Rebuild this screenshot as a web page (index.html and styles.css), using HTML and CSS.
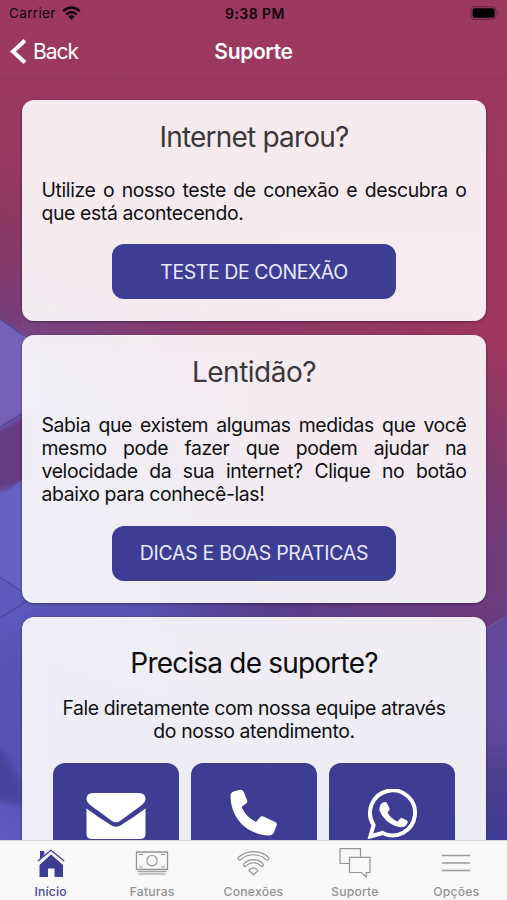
FILE: index.html
```html
<!DOCTYPE html>
<html lang="pt-BR">
<head>
<meta charset="utf-8">
<meta name="viewport" content="width=device-width, initial-scale=1">
<title>Suporte</title>
<link rel="stylesheet" href="styles.css">
</head>
<body>
<div class="app">
  <svg class="backdrop" viewBox="0 0 507 900" preserveAspectRatio="none" aria-hidden="true">
    <defs>
      <linearGradient id="right" x1="0" y1="0" x2="0" y2="1">
        <stop offset="0" stop-color="#9c395f"/><stop offset=".38" stop-color="#9f375d"/>
        <stop offset=".5" stop-color="#833a6b"/><stop offset=".62" stop-color="#6d3b7a"/><stop offset=".7" stop-color="#693c80"/>
        <stop offset=".93" stop-color="#403c97"/>
      </linearGradient>
      <linearGradient id="wedge" x1="0" y1="0" x2="0" y2="1">
        <stop offset="0" stop-color="#624899"/><stop offset=".4" stop-color="#604ba2"/><stop offset=".57" stop-color="#5c479a"/><stop offset=".7" stop-color="#4d3f8d"/><stop offset="1" stop-color="#403c97"/>
      </linearGradient>
      <linearGradient id="left" x1="0" y1="0" x2="0" y2="1">
        <stop offset="0" stop-color="#9c395f"/><stop offset=".16" stop-color="#9a395f"/><stop offset=".28" stop-color="#863966"/><stop offset=".36" stop-color="#75407f"/>
        <stop offset=".4" stop-color="#7562ba"/><stop offset=".6" stop-color="#6560c2"/><stop offset=".75" stop-color="#5655b6"/><stop offset=".85" stop-color="#5654b4"/><stop offset=".93" stop-color="#605bc4"/>
      </linearGradient>
      <linearGradient id="fade"><stop offset="0" stop-color="#fff"/><stop offset=".12" stop-color="#bbb"/><stop offset=".55" stop-color="#000"/></linearGradient>
      <mask id="side"><path fill="url(#fade)" d="M0 0H507V900H0z"/></mask>
      <linearGradient id="lower" x1="0" x2="1"><stop offset="0" stop-color="#5a59bb"/><stop offset=".3" stop-color="#5752b0"/><stop offset=".55" stop-color="#573f8d"/><stop offset="1" stop-color="#6d3a7b"/></linearGradient>
      <linearGradient id="upper" x1="0" x2="1"><stop offset="0" stop-color="#784483"/><stop offset=".4" stop-color="#873969"/><stop offset="1" stop-color="#9f375d"/></linearGradient>
      <filter id="soft"><feGaussianBlur stdDeviation="3"/></filter>
    </defs>
    <path fill="url(#right)" d="M0 0H507V900H0z"/>
    <path fill="url(#left)" mask="url(#side)" d="M0 0H507V900H0z"/>
    <path fill="url(#upper)" d="M22 316H486V345H22z"/>
    <path fill="url(#lower)" d="M0 590H486V628H0z"/>
    <path fill="#7762ba" d="M0 319L26 337V410L0 427z"/>
    <path filter="url(#soft)" fill="#653b82" d="M-8 434L30 412V482L-8 492z"/>
    <path fill="#6861c1" d="M0 497L22 480V600L0 580z"/>
    <path fill="#5c5aba" d="M0 578L33 598V609L0 630z"/>
    <path fill="none" stroke="#49489f" stroke-width="1.300" d="M0 319L24 336M0 427L24 413M0 577L32 598L0 618"/>
    <path filter="url(#soft)" fill="#48439c" d="M-8 735L14 770L22 785V805L-8 800z"/>
    <path fill="url(#wedge)" d="M480 632L507 616V840H480z"/>
    <path fill="none" stroke="#7b589f" d="M480 632L507 616"/>
  </svg>

  <div class="content">
    <header>
      <div class="status">
        <span class="carrier">Carrier
          <svg width="19" height="14" viewBox="0 0 19 14"><g fill="none" stroke="#100408" stroke-width="2.5"><path d="M1.2 5.1Q9.5 -2 17.8 5.1"/><path d="M4.2 8.4Q9.500 3.900 14.8 8.400"/></g><path fill="#100408" d="M6.400 10.600Q9.500 8 12.600 10.600L9.500 13.700z"/></svg>
        </span>
        <span class="clock">9:38 PM</span>
        <svg class="battery" width="31" height="14" viewBox="0 0 31 14"><rect x="1" y=".7" width="25" height="12.600" rx="4" fill="none" stroke="#6e2a45" stroke-width="1.300"/><rect x="2.600" y="2.300" width="22" height="9.400" rx="2.300" fill="#000"/><path fill="#6e2a45" d="M27.600 4.600Q30 7 27.600 9.400z"/></svg>
      </div>
      <nav class="navbar">
        <a class="back"><svg width="18" height="28" viewBox="0 0 18 28"><path d="M16 2.500L4 13.500L16 24.500" fill="none" stroke="#fff" stroke-width="4"/></svg><span>Back</span></a>
        <h1>Suporte</h1>
      </nav>
    </header>

    <main>
      <section class="card card-test">
        <h2><span class="t1">Internet parou?</span></h2>
        <p class="copy">Utilize o nosso teste de conexão e descubra o que está acontecendo.</p>
        <a class="button b1">TESTE DE CONEXÃO</a>
      </section>
      <section class="card card-tips">
        <h2><span class="t2">Lentidão?</span></h2>
        <p class="copy">Sabia que existem algumas medidas que você mesmo pode fazer que podem ajudar na velocidade da sua internet? Clique no botão abaixo para conhecê-las!</p>
        <a class="button b2">DICAS E BOAS PRATICAS</a>
      </section>
      <section class="card card-contact">
        <h2><span class="t3">Precisa de suporte?</span></h2>
        <p class="intro">Fale diretamente com nossa equipe através<br>do nosso atendimento.</p>
        <div class="tiles">
          <a class="tile"><svg width="62" height="50" viewBox="0 0 62 50"><path fill="#fff" d="M8 4H54Q60.500 4 60.500 10C60.500 14 55 17.500 50 21L35 32Q31 34.500 27 32L12 21C7 17.500 1.500 14 1.500 10Q1.500 4 8 4zM1.500 19.500Q13 28 25 35.500Q31 40 37 35.500Q49 28 60.500 19.500V45Q60.500 50 55 50H7Q1.500 50 1.500 45z"/></svg></a>
          <a class="tile"><svg width="62" height="50" viewBox="0 0 62 50"><path fill="#fff" d="M10.500 2.500L17 .8Q19.500 .5 20.700 3L24 11Q25 13 23 14.500L18.500 18Q23 28 33 33L37 28.200Q38.500 26.500 40.500 27.500L50 32Q54.500 33.500 53.800 36L51.500 42Q50 46.500 45.500 46.500C23 45 8 29 7.500 7Q7.500 3.500 10.500 2.500z"/></svg></a>
          <a class="tile"><svg width="62" height="50" viewBox="0 0 62 50"><path fill="none" stroke="#fff" stroke-width="4" d="M9.300 47.500L12.600 36A22.500 22.500 0 1 1 21.500 44z"/><path fill="#fff" d="M21 14Q24 12 26 14L28.500 19.500Q29 21 26.500 23.500Q29.500 29.500 36.500 32.500Q39.500 28.500 41 29L46 31.500Q47.500 32.300 46 35Q43.500 39 38 38C28 35.500 21.500 29 18.500 21.500Q18 17 21 14z"/></svg></a>
        </div>
      </section>
    </main>

    <nav class="tabs">
      <a class="tab active">
        <svg width="36" height="34" viewBox="0 0 36 34"><path fill="#3e3d94" d="M6.500 31V19L18 8.500L30 19V31H21.500V22.500H15V31zM7 5H11.300V9L7 13z"/><path fill="none" stroke="#3e3d94" stroke-width="1.300" d="M5 15L18 4.300L31.200 15"/></svg>
        <span>Início</span></a>
      <a class="tab">
        <svg width="36" height="34" viewBox="0 0 36 34"><g fill="none" stroke="#929292"><path d="M2.500 6H33.500V23.500H2.500z" stroke-width="1.300"/><circle cx="18" cy="14.700" r="5.200" stroke-width="1.200"/><path d="M5 8.500H9M27 8.500H31M5 21H9M27 21H31M3.500 25.700H32.500M4.500 28H31.500"/></g></svg>
        <span>Faturas</span></a>
      <a class="tab">
        <svg width="36" height="34" viewBox="0 0 36 34"><g fill="#f8f8f8" stroke="#929292" stroke-width="1.100" stroke-linejoin="round"><path d="M3 12C11 3.500 26 3.500 34 12Q33.500 14.500 31.500 14C24 7 13 7 5.500 14Q3.500 14.500 3 12z"/><path d="M8.500 18.500C13.500 12 23.500 12 28.500 18.500Q28.500 20.500 26.500 20.500C22 15.500 15 15.500 10.500 20.500Q8.500 20.500 8.500 18.500z"/><path d="M14 24.300Q18.500 19.500 23 24.300Q23 25.500 21.500 26L18.500 29L15.500 26Q14 25.500 14 24.300z"/></g></svg>
        <span>Conexões</span></a>
      <a class="tab">
        <svg width="36" height="34" viewBox="0 0 36 34"><path fill="none" stroke="#929292" stroke-width="1.200" d="M12 17.500H3V2.700H23.500V10.500M12.500 11.300H33V26.500H29.300V31L24.500 26.500H12.500z"/></svg>
        <span>Suporte</span></a>
      <a class="tab">
        <svg width="36" height="34" viewBox="0 0 36 34"><path stroke="#999" stroke-width="1.400" d="M4 9.500H32M4 17H32M4 24.500H32"/></svg>
        <span>Opções</span></a>
    </nav>
  </div>
</div>
</body>
</html>
```
FILE: styles.css
```css
* { box-sizing: border-box; }
body { margin: 0; font-family: Inter, "Liberation Sans", sans-serif; color: #101012; }
h1, h2, p { margin: 0; font-weight: 400; }
svg { display: block; flex: none; }
.app { display: grid; width: 507px; height: 900px; overflow: hidden; }
.backdrop, .content { grid-area: 1 / 1; width: 507px; height: 900px; }
.backdrop { z-index: 0; }
.content { z-index: 1; display: flex; flex-direction: column; }

header { flex: none; height: 79px; border-bottom: 1px solid #8d3457; }
.status { display: grid; grid-template-columns: 1fr auto 1fr; height: 26px; padding: 0 6px 0 9px; align-items: center; color: #100408; font-size: 13.5px; }
.carrier { display: flex; align-items: center; gap: 6px; letter-spacing: .35px; }
.clock { font-weight: 600; font-size: 14px; letter-spacing: .45px; }
.battery { justify-self: end; }
.navbar { display: grid; grid-template-columns: 1fr auto 1fr; height: 51px; padding: 0 9px; align-items: center; color: #fff; }
.back { display: flex; align-items: center; gap: 6px; font-size: 21px; letter-spacing: -1px; }
h1 { font-size: 21px; font-weight: 600; letter-spacing: -.35px; }

main { flex: 1; min-height: 0; overflow: hidden; display: flex; flex-direction: column; gap: 14px; padding: 21px 21px 0 22px; }
.card { flex: none; border-radius: 12px; padding: 17px 20px; background: rgba(255, 255, 255, .9); box-shadow: 0 1px 3px rgba(30, 10, 50, .5); display: flex; flex-direction: column; align-items: center; }
.card-test { height: 221px; }
.card-tips { height: 268px; }
.card-contact { height: 320px; padding-top: 27px; }
h2 { font-size: 28px; line-height: 40px; white-space: nowrap; color: #3a383b; }
.t1 { letter-spacing: -.8px; }
.t2 { letter-spacing: -.5px; }
.t3 { letter-spacing: -.8px; }
.card-contact h2 { color: #0c0c0e; line-height: 38px; }
.copy { width: 425px; margin: 21.5px 0 19.5px; font-size: 19.4px; line-height: 23.2px; letter-spacing: -.38px; text-align: justify; }
.button { display: flex; align-items: center; justify-content: center; width: 284px; height: 55px; border-radius: 12px; background: #3e3d94; color: #e8eaff; font-size: 19.5px; letter-spacing: -.45px; white-space: nowrap; }
.b2 { letter-spacing: -.3px; }
.intro { margin-top: 15px; font-size: 19.4px; line-height: 23.2px; letter-spacing: -.37px; text-align: center; white-space: nowrap; }
.tiles { display: flex; gap: 12px; margin-top: 20px; }
.tile { display: flex; justify-content: center; width: 126px; height: 126px; padding-top: 26px; border-radius: 12px; background: #3e3d94; }

.tabs { flex: none; height: 60px; display: grid; grid-template-columns: repeat(5, 1fr); background: #f8f8f8; border-top: 1px solid #d5d5dc; }
.tab { display: flex; flex-direction: column; align-items: center; padding-top: 5px; color: #929292; font-size: 12.2px; font-weight: 500; line-height: 18px; letter-spacing: .2px; }
.tab span { margin-top: 3px; }
.tab.active { color: #4845a0; }
```
